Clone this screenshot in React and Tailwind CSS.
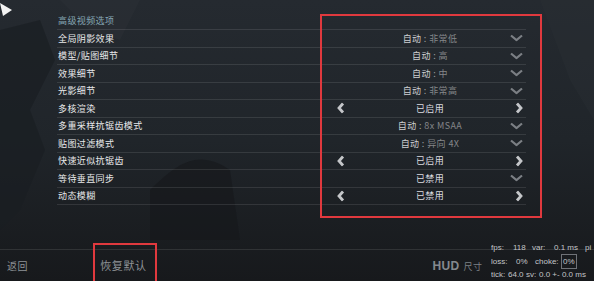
import React from 'react';

const rows = [
  { label: '全局阴影效果', type: 'auto', value: '非常低' },
  { label: '模型/贴图细节', type: 'auto', value: '高' },
  { label: '效果细节', type: 'auto', value: '中' },
  { label: '光影细节', type: 'auto', value: '非常高' },
  { label: '多核渲染', type: 'toggle', value: '已启用' },
  { label: '多重采样抗锯齿模式', type: 'auto', value: '8x MSAA' },
  { label: '贴图过滤模式', type: 'auto', value: '异向 4X' },
  { label: '快速近似抗锯齿', type: 'toggle', value: '已启用' },
  { label: '等待垂直同步', type: 'select', value: '已禁用' },
  { label: '动态模糊', type: 'toggle', value: '已禁用' }
];

// net graph words, x offsets taken from the screenshot
const netLines = [
  [[0, 'fps:'], [22, '118'], [41, 'var:'], [63, '0.1 ms'], [94, 'pi']],
  [[0, 'loss:'], [25, '0%'], [44, 'choke:'], [71, '0%', true]],
  [[0, 'tick:'], [17, '64.0'], [35, 'sv:'], [48, '0.0 +- 0.0 ms']]
];

const Chevron = () => (
  <svg width="13" height="7" viewBox="0 0 13 7" className="absolute right-[3px] top-1/2 -translate-y-1/2">
    <polyline points="1,1 6.5,5.5 12,1" fill="none" stroke="#7b7f84" strokeWidth="2.2" />
  </svg>
);

const Arrow = ({ dir }) => (
  <svg
    width="8"
    height="11"
    viewBox="0 0 8 11"
    className={`absolute top-1/2 -translate-y-1/2 ${dir === 'left' ? 'left-[3px]' : 'right-[3px]'}`}
  >
    <polyline
      points={dir === 'left' ? '6,1 2,5.5 6,10' : '2,1 6,5.5 2,10'}
      fill="none"
      stroke="#c4c6c9"
      strokeWidth="2.8"
    />
  </svg>
);

const Control = ({ row }) => (
  <div className="relative w-[192px] h-full flex items-center justify-center text-[9px] tracking-[0.4px]">
    {row.type === 'auto' ? (
      <span>
        <span className="text-[#cfd0d2]">自动</span>
        <span className="text-[#9a9c9f]"> : </span>
        <span className="text-[#85878a]">{row.value}</span>
      </span>
    ) : (
      <span className="text-[#dcdde0]">{row.value}</span>
    )}
    {row.type === 'toggle' && <Arrow dir="left" />}
    {row.type === 'toggle' && <Arrow dir="right" />}
    {row.type !== 'toggle' && <Chevron />}
  </div>
);

const App = () => {
  return (
    <div
      className="relative w-[594px] h-[281px] overflow-hidden bg-gradient-to-b from-[#252a30] via-[#20252a] to-[#17191c]"
      style={{ fontFamily: '"Noto Sans CJK SC", "Noto Sans", sans-serif' }}
    >
      {/* background silhouettes */}
      <svg width="594" height="281" className="absolute inset-0" viewBox="0 0 594 281">
        <path d="M0 30 L40 20 L55 60 L30 110 L45 150 L20 210 L0 230 Z" fill="#1a1e22" opacity="0.7" />
        <path d="M60 0 L140 0 L120 40 L90 30 Z" fill="#2b3036" opacity="0.5" />
        <path d="M150 190 C180 160 200 150 230 170 L240 240 L150 240 Z" fill="#15181b" opacity="0.6" />
        <path d="M540 0 L594 0 L594 120 L570 80 Z" fill="#2a2f35" opacity="0.4" />
      </svg>
      <svg width="14" height="16" viewBox="0 0 14 16" className="absolute left-0 top-[2px]">
        <polygon points="0,1 12,8 3,14" fill="#f2f2f2" />
      </svg>

      <div className="relative flex flex-col h-full">
        <div className="ml-[57px] w-[469px] pt-[12px]">
          <div className="h-[17px] flex items-center pl-px text-[9px] tracking-[0.4px] text-[#86a6b3]">
            高级视频选项
          </div>
          <div className="border-b border-white/10">
            {rows.map((row) => (
              <div
                key={row.label}
                className="h-[17.5px] flex items-center justify-between border-t border-white/10"
              >
                <span className="pl-px text-[9px] tracking-[0.4px] text-[#e8e9ea]">{row.label}</span>
                <Control row={row} />
              </div>
            ))}
          </div>
        </div>

        <div className="mt-[44px] flex-1 border-t border-white/10 flex items-center tracking-[0.6px] text-[#8e9297]">
          <span className="ml-[7px] text-[10px]">返回</span>
          <span className="ml-[72px] text-[11px]">恢复默认</span>
          <span className="ml-[286px] flex items-baseline gap-[4px]">
            <span className="text-[12px] font-bold tracking-[0.3px] text-[#85898e]" style={{ fontFamily: '"Liberation Sans", sans-serif' }}>HUD</span>
            <span className="text-[9px] text-[#7d8186]">尺寸</span>
          </span>
        </div>
      </div>

      {/* net graph overlay */}
      <div
        className="absolute left-[491px] top-[241px] w-[103px] overflow-hidden text-[8px] leading-[13.5px] text-[#c3c5c8] whitespace-pre"
        style={{ fontFamily: '"Liberation Sans", sans-serif' }}
      >
        {netLines.map((line, i) => (
          <div key={i} className="relative h-[13.5px]">
            {line.map(([x, text, boxed]) => (
              <span
                key={x}
                className={`absolute top-0 ${boxed ? 'outline outline-1 outline-[#6f7277] px-px' : ''}`}
                style={{ left: x }}
              >
                {text}
              </span>
            ))}
          </div>
        ))}
      </div>

      {/* annotation boxes */}
      <div className="absolute left-[320px] top-[14px] w-[222px] h-[204px] border-2 border-[#e0393e]" />
      <div className="absolute left-[93px] top-[243px] w-[64px] h-[42px] border-2 border-[#e0393e]" />
    </div>
  );
};

export default App;
